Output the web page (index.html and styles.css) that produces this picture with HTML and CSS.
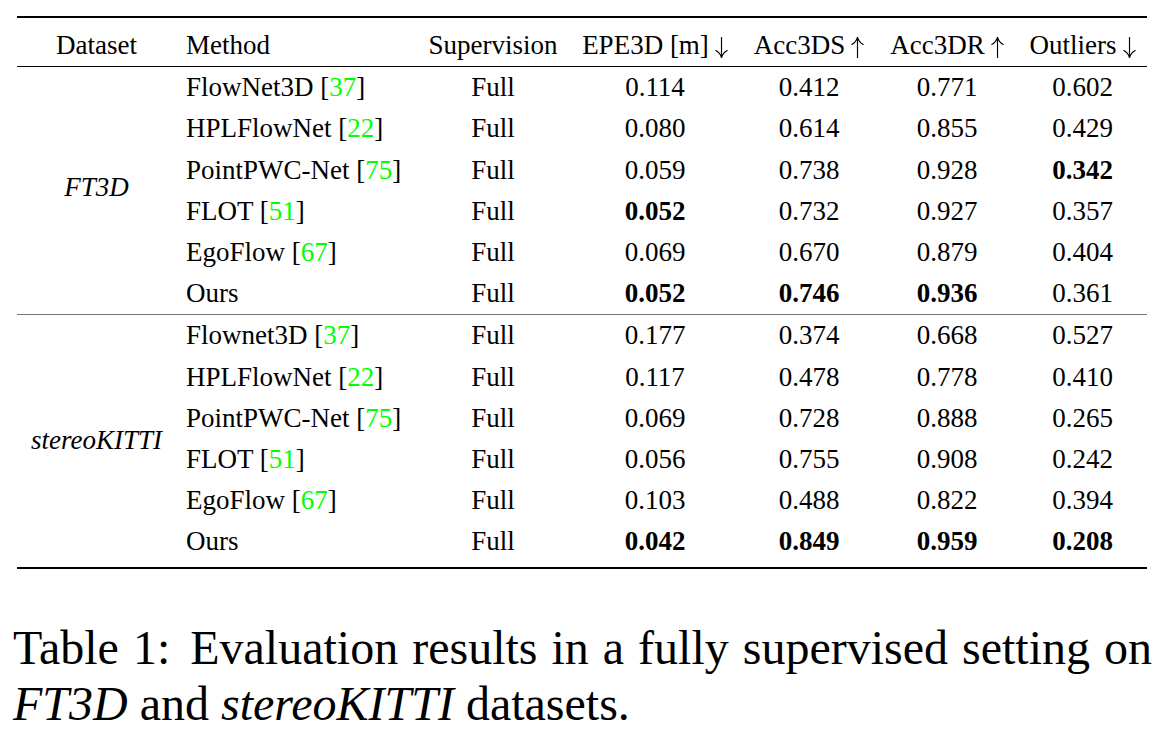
FILE: index.html
```html
<!DOCTYPE html>
<html lang="en">
<head>
<meta charset="utf-8">
<title>Table 1</title>
<link rel="stylesheet" href="styles.css">
</head>
<body>
<div class="page">
  <table class="results">
    <colgroup>
      <col class="c-dataset">
      <col class="c-method">
      <col class="c-sup">
      <col class="c-epe">
      <col class="c-accs">
      <col class="c-accr">
      <col class="c-out">
    </colgroup>
    <thead>
      <tr>
        <th class="ctr">Dataset</th>
        <th class="left">Method</th>
        <th class="ctr">Supervision</th>
        <th class="ctr">EPE3D [m]<svg class="arr" viewBox="0 0 13 21" width="13" height="21" aria-label="down"><path d="M6.5 0 V20.5 M0.8 13.5 Q5 15.5 6.5 20.8 Q8 15.5 12.2 13.5"/></svg></th>
        <th class="ctr">Acc3DS<svg class="arr" viewBox="0 0 13 21" width="13" height="21" aria-label="up"><path d="M6.5 21 V0.5 M0.8 7.5 Q5 5.5 6.5 0.2 Q8 5.5 12.2 7.5"/></svg></th>
        <th class="ctr">Acc3DR<svg class="arr" viewBox="0 0 13 21" width="13" height="21" aria-label="up"><path d="M6.5 21 V0.5 M0.8 7.5 Q5 5.5 6.5 0.2 Q8 5.5 12.2 7.5"/></svg></th>
        <th class="ctr">Outliers<svg class="arr" viewBox="0 0 13 21" width="13" height="21" aria-label="down"><path d="M6.5 0 V20.5 M0.8 13.5 Q5 15.5 6.5 20.8 Q8 15.5 12.2 13.5"/></svg></th>
      </tr>
    </thead>
    <tbody class="group">
      <tr>
        <td class="ds ds-ft3d" rowspan="6"><em>FT3D</em></td>
        <td class="left">FlowNet3D [<span class="cite">37</span>]</td>
        <td>Full</td><td>0.114</td><td>0.412</td><td>0.771</td><td>0.602</td>
      </tr>
      <tr>
        <td class="left">HPLFlowNet [<span class="cite">22</span>]</td>
        <td>Full</td><td>0.080</td><td>0.614</td><td>0.855</td><td>0.429</td>
      </tr>
      <tr>
        <td class="left">PointPWC-Net [<span class="cite">75</span>]</td>
        <td>Full</td><td>0.059</td><td>0.738</td><td>0.928</td><td class="b">0.342</td>
      </tr>
      <tr>
        <td class="left">FLOT [<span class="cite">51</span>]</td>
        <td>Full</td><td class="b">0.052</td><td>0.732</td><td>0.927</td><td>0.357</td>
      </tr>
      <tr>
        <td class="left">EgoFlow [<span class="cite">67</span>]</td>
        <td>Full</td><td>0.069</td><td>0.670</td><td>0.879</td><td>0.404</td>
      </tr>
      <tr class="last-ft3d">
        <td class="left">Ours</td>
        <td>Full</td><td class="b">0.052</td><td class="b">0.746</td><td class="b">0.936</td><td>0.361</td>
      </tr>
    </tbody>
    <tbody class="group">
      <tr>
        <td class="ds" rowspan="6"><em>stereoKITTI</em></td>
        <td class="left">Flownet3D [<span class="cite">37</span>]</td>
        <td>Full</td><td>0.177</td><td>0.374</td><td>0.668</td><td>0.527</td>
      </tr>
      <tr>
        <td class="left">HPLFlowNet [<span class="cite">22</span>]</td>
        <td>Full</td><td>0.117</td><td>0.478</td><td>0.778</td><td>0.410</td>
      </tr>
      <tr>
        <td class="left">PointPWC-Net [<span class="cite">75</span>]</td>
        <td>Full</td><td>0.069</td><td>0.728</td><td>0.888</td><td>0.265</td>
      </tr>
      <tr>
        <td class="left">FLOT [<span class="cite">51</span>]</td>
        <td>Full</td><td>0.056</td><td>0.755</td><td>0.908</td><td>0.242</td>
      </tr>
      <tr>
        <td class="left">EgoFlow [<span class="cite">67</span>]</td>
        <td>Full</td><td>0.103</td><td>0.488</td><td>0.822</td><td>0.394</td>
      </tr>
      <tr class="last-row">
        <td class="left">Ours</td>
        <td>Full</td><td class="b">0.042</td><td class="b">0.849</td><td class="b">0.959</td><td class="b">0.208</td>
      </tr>
    </tbody>
  </table>
  <p class="caption"><span class="label">Table 1:</span> Evaluation results in a fully supervised setting on <em>FT3D</em> and <em>stereoKITTI</em> datasets.</p>
</div>
</body>
</html>
```

FILE: styles.css
```css
html, body {
  margin: 0;
  padding: 0;
  background: #ffffff;
}

body {
  font-family: "Liberation Serif", "Times New Roman", serif;
  color: #000000;
}

.page {
  padding: 16px 0 0 17px;
}

.results {
  border-collapse: separate;
  border-spacing: 0;
  table-layout: fixed;
  width: 1130px;
  font-size: 27px;
  border-top: 2px solid #000;
  border-bottom: 2px solid #000;
}

.c-dataset { width: 159px; }
.c-method  { width: 242px; }
.c-sup     { width: 150px; }
.c-epe     { width: 174px; }
.c-accs    { width: 134px; }
.c-accr    { width: 142px; }
.c-out     { width: 129px; }

.results th,
.results td {
  padding: 0;
  line-height: 41.2px;
  text-align: center;
  white-space: nowrap;
  font-weight: 400;
  vertical-align: baseline;
}

.results thead th {
  padding-top: 7px;
  border-bottom: 1px solid #000;
}

.results .left {
  text-align: left;
  padding-left: 10px;
}

.results .ds {
  vertical-align: middle;
}

.results .ds-ft3d {
  padding-bottom: 7px;
  border-bottom: 1px solid #777;
}

.last-ft3d td {
  border-bottom: 1px solid #777;
}

.last-row td {
  padding-bottom: 4px;
}

.results .b {
  font-weight: 700;
}

.arr {
  display: inline-block;
  margin-left: 6px;
  vertical-align: -3.5px;
  fill: none;
  stroke: #000;
  stroke-width: 1.15;
  stroke-linecap: round;
}

.cite {
  color: #00ff00;
}

.caption {
  margin: 51px 0 0 -4px;
  width: 1139px;
  font-size: 48px;
  line-height: 56px;
  text-align: justify;
}

.caption .label {
  margin-right: 6px;
}
```
